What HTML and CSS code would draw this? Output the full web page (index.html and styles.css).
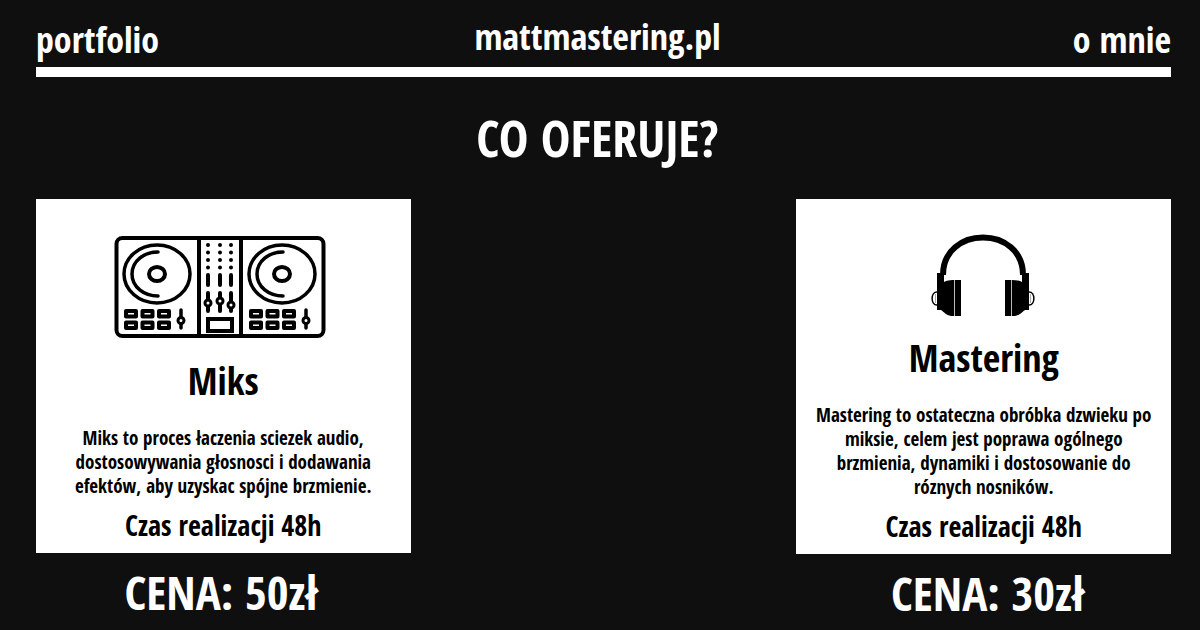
FILE: index.html
```html
<!DOCTYPE html>
<html lang="pl">
<head>
<meta charset="utf-8">
<meta name="viewport" content="width=device-width, initial-scale=1">
<title>mattmastering.pl</title>
<link rel="stylesheet" href="styles.css">
</head>
<body>
<header class="header">
  <nav class="nav">
    <a class="nav-link" href="#portfolio">portfolio</a>
    <a class="nav-link brand" href="#">mattmastering.pl</a>
    <a class="nav-link about" href="#o-mnie">o mnie</a>
  </nav>
</header>
<main>
  <h1 class="title">CO OFERUJE?</h1>
  <div class="offers">
    <section class="offer">
      <article class="card">
        <svg class="icon-mixer" viewBox="0 0 212 104" fill="none" stroke="#000" stroke-width="4" aria-hidden="true">
          <defs>
            <g id="deck">
              <ellipse cx="43" cy="39" rx="33" ry="29" stroke-width="3.500"/>
              <path d="M44 17C30 17 18 26 18 39S30 61 44 61" stroke-width="3.500" stroke-linecap="round"/>
              <ellipse cx="43" cy="39" rx="8" ry="7"/>
              <path d="M12 76h10v5.500h-10zM28.500 76h10v5.500h-10zM45 76h10v5.500h-10zM12 87.500h10v5.500h-10zM28.500 87.500h10v5.500h-10zM45 87.500h10v5.500h-10z" stroke-width="4" stroke-linejoin="round"/>
              <path d="M67 75v18" stroke-width="3.500" stroke-linecap="round"/>
              <circle cx="67" cy="85.500" r="3" fill="#fff" stroke-width="3"/>
            </g>
          </defs>
          <rect x="2.500" y="3" width="207" height="98" rx="6"/>
          <path d="M85 3v98M127 3v98"/>
          <use href="#deck"/>
          <use href="#deck" x="125"/>
          <path d="M94 10v24M106 10v24M117 10v24" stroke-dasharray="0 7.500" stroke-linecap="round"/>
          <path d="M94 40v10M106 40v10M117 40v10M94 58v18M106 58v18M117 58v18" stroke-linecap="round"/>
          <g fill="#fff" stroke-width="3"><circle cx="94" cy="68" r="3"/><circle cx="106" cy="66" r="3"/><circle cx="117" cy="70" r="3"/></g>
          <rect x="94" y="84" width="24" height="12"/>
        </svg>
        <h2 class="name">Miks</h2>
        <p class="description">Miks to proces łaczenia sciezek audio,<br>dostosowywania głosnosci i dodawania<br>efektów, aby uzyskac spójne brzmienie.</p>
        <p class="time">Czas realizacji 48h</p>
      </article>
      <p class="price">CENA: 50zł</p>
    </section>
    <section class="offer">
      <article class="card">
        <svg class="icon-headphones" viewBox="0 0 104 84" aria-hidden="true">
          <path d="M12 41C12 17 31 3.500 52 3.500S92 17 92 41" fill="none" stroke="#000" stroke-width="6"/>
          <g id="cup">
            <path d="M6 39h7v9c4-2 7-2 17-2v36H20c-5-1-7-4-10-6H6z"/>
            <path d="M23.500 46v36" stroke="#bbb"/>
            <path d="M6 58C-.5 58-.5 71 6 71" fill="none" stroke="#000" stroke-width="1.500"/>
            <path d="M4.500 60v9" stroke="#aaa"/>
          </g>
          <use href="#cup" transform="translate(104 0) scale(-1 1)"/>
        </svg>
        <h2 class="name">Mastering</h2>
        <p class="description">Mastering to ostateczna obróbka dzwieku po<br>miksie, celem jest poprawa ogólnego<br>brzmienia, dynamiki i dostosowanie do<br>róznych nosników.</p>
        <p class="time">Czas realizacji 48h</p>
      </article>
      <p class="price price-last">CENA: 30zł</p>
    </section>
  </div>
</main>
</body>
</html>
```
FILE: styles.css
```css
* { box-sizing: border-box; }
body {
  margin: 0;
  padding: 0 29px 0 36px;
  background: #0f0f0f;
  color: #fff;
  font-family: "Open Sans Condensed", "Liberation Sans Narrow", "Arial Narrow", "DejaVu Sans Condensed", sans-serif;
  font-weight: 700;
}
h1, h2, p { margin: 0; }
.header { border-bottom: 10px solid #fff; }
.nav {
  display: grid;
  grid-template-columns: 1fr auto 1fr;
  align-items: start;
  padding-top: 20px;
  height: 67px;
}
.nav-link {
  color: inherit;
  font-size: 36px;
  line-height: 40px;
  text-decoration: none;
}
.nav-link:hover { text-decoration: underline; }
.brand { padding-right: 12px; line-height: 34px; }
.about { text-align: right; }
.title {
  padding: 32px 12px 32px 0;
  font-size: 50px;
  line-height: 58px;
  text-align: center;
}
.offers {
  display: flex;
  justify-content: space-between;
  align-items: flex-start;
  gap: 24px;
}
.offer { width: 33%; text-align: center; }
.card {
  display: flex;
  flex-direction: column;
  align-items: center;
  padding: 35px 8px 12px;
  background: #fff;
  color: #000;
}
.icon-mixer { width: 212px; height: 104px; margin: 1px 6px 18px 0; }
.icon-headphones { width: 104px; height: 84px; margin: 0 2px 16px 0; }
.name { font-size: 38px; line-height: 46px; }
.description { margin-top: 23px; font-size: 19px; line-height: 24px; }
.time { margin-top: 11px; font-size: 28px; line-height: 32px; }
.price { padding: 10px 4px 0 0; font-size: 47px; line-height: 58px; }
.price-last { padding: 10px 0 0 8px; }
```
